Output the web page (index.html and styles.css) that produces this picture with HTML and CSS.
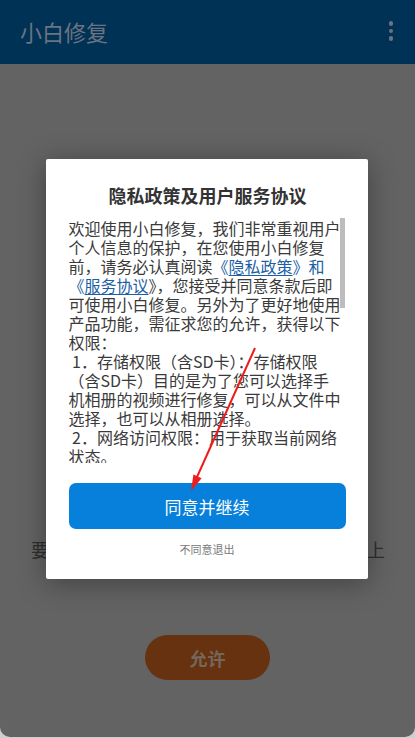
FILE: index.html
```html
<!DOCTYPE html>
<html lang="zh">
<head>
<meta charset="utf-8">
<link rel="stylesheet" href="styles.css">
</head>
<body>
<div class="app">
  <header class="bar">
    <div class="bar-title">小白修复</div>
    <div class="menu"><span></span><span></span><span></span></div>
  </header>
  <main class="content">
    <div class="behind-line"><span>要</span><span>上</span></div>
    <div class="allow">允许</div>
  </main>
  <div class="dialog">
    <div class="dlg-title">隐私政策及用户服务协议</div>
    <div class="scroll">
      <div class="text">欢迎使用小白修复，我们非常重视用户<br>个人信息的保护，在您使用小白修复<br>前，请务必认真阅读<span class="link">《<u>隐私政策</u>》和<br>《<u>服务协议</u></span>》，您接受并同意条款后即<br>可使用小白修复。另外为了更好地使用<br>产品功能，需征求您的允许，获得以下<br>权限：<br>&nbsp;1．存储权限（含SD卡）：存储权限<br>（含SD卡）目的是为了您可以选择手<br>机相册的视频进行修复，可以从文件中<br>选择，也可以从相册选择。<br>&nbsp;2．网络访问权限：用于获取当前网络<br>状态。</div>
      <div class="thumb"></div>
    </div>
    <div class="agree">同意并继续</div>
    <div class="decline">不同意退出</div>
  </div>
  <svg class="arrow" width="415" height="738" viewBox="0 0 415 738">
    <line x1="255" y1="348" x2="197" y2="477" stroke="#ee1c1c" stroke-width="2"/>
    <polygon points="191,491 201.6,478.2 193.4,474.6" fill="#ee1c1c"/>
  </svg>
</div>
</body>
</html>
```
FILE: styles.css
```css
html, body {
  margin: 0;
  padding: 0;
}
body {
  background: #cfcfcf;
  width: 415px;
  height: 738px;
  overflow: hidden;
  font-family: "Noto Sans CJK SC", "Noto Sans", sans-serif;
}
.app {
  position: relative;
  width: 415px;
  height: 737px;
  display: flex;
  flex-direction: column;
  background: #636363;
  border-radius: 0 0 10px 10px;
  overflow: hidden;
}
.bar {
  height: 64px;
  flex: none;
  background: #003256;
  display: flex;
  align-items: center;
  justify-content: space-between;
  padding: 0 22px 0 20px;
}
.bar-title {
  font-size: 22px;
  line-height: 30px;
  color: #6b7480;
  margin-top: -2px;
}
.menu {
  display: flex;
  flex-direction: column;
  gap: 3px;
  margin-top: -2px;
}
.menu span {
  width: 4.5px;
  height: 4.5px;
  border-radius: 50%;
  background: #6b7480;
}
.content {
  flex: 1;
  display: flex;
  flex-direction: column;
  align-items: center;
}
.behind-line {
  align-self: stretch;
  display: flex;
  justify-content: space-between;
  padding: 0 30px 0 31px;
  margin-top: 473px;
  font-size: 18px;
  line-height: 24px;
  color: #2e2e2e;
}
.allow {
  margin-top: 74px;
  width: 125px;
  height: 45px;
  border-radius: 23px;
  background: #66320f;
  color: #76665a;
  font-size: 18px;
  font-weight: bold;
  display: flex;
  align-items: center;
  justify-content: center;
}
.dialog {
  position: absolute;
  left: 46px;
  top: 159px;
  width: 322px;
  height: 420px;
  background: #fff;
  border-radius: 2px;
  box-shadow: 0 4px 28px rgba(0, 0, 0, 0.35);
  display: flex;
  flex-direction: column;
  align-items: center;
  box-sizing: border-box;
  padding-top: 24px;
}
.dlg-title {
  font-size: 18px;
  line-height: 24px;
  font-weight: bold;
  color: #333;
  margin-left: 1px;
}
.scroll {
  position: relative;
  margin-top: 11px;
  width: 276px;
  height: 245px;
  overflow: hidden;
  margin-left: -1px;
}
.text {
  padding-top: 1px;
  font-size: 16px;
  line-height: 19px;
  color: #3a3a3a;
  white-space: nowrap;
}
.link {
  color: #1c5fa6;
}
.link u {
  text-decoration-thickness: 1px;
  text-underline-offset: 2px;
}
.thumb {
  position: absolute;
  right: 0;
  top: 0;
  width: 5px;
  height: 90px;
  background: #bdbdbd;
}
.agree {
  margin-top: 20px;
  width: 277px;
  height: 46px;
  border-radius: 7px;
  background: #0780dc;
  color: #fff;
  font-size: 17px;
  display: flex;
  align-items: center;
  justify-content: center;
}
.decline {
  margin-top: 12px;
  font-size: 11px;
  line-height: 16px;
  color: #7a7a7a;
}
.arrow {
  position: absolute;
  left: 0;
  top: 0;
  pointer-events: none;
}
```
